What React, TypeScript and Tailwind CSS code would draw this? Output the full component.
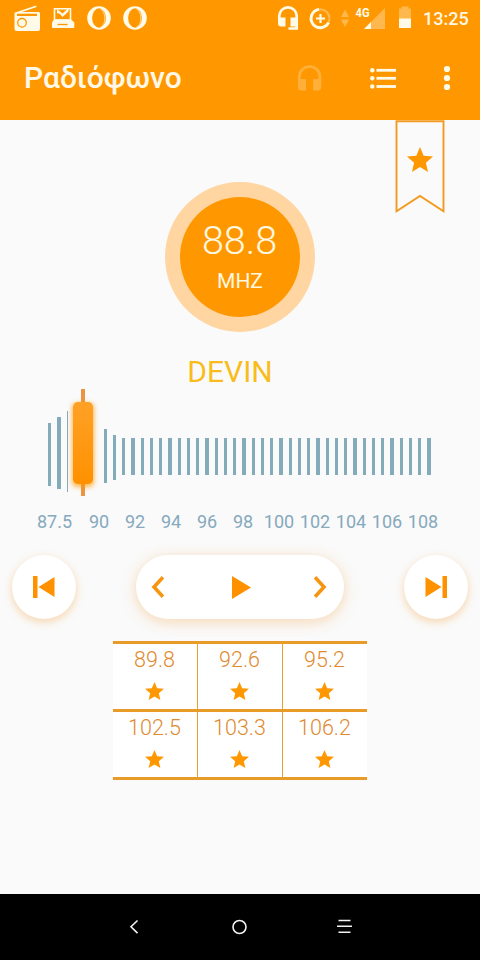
const dialBars = Array.from({ length: 42 }, (_, i) => i).filter((i) => i < 3 || i > 5);

// top and bottom of the bars around the tuner, the rest are 438-475
const raised: Record<number, [number, number]> = {
  0: [423, 486],
  1: [417, 489],
  2: [411, 492],
  6: [429, 483],
  7: [435, 480],
};

const dialLabels = ["87.5", "90", "92", "94", "96", "98", "100", "102", "104", "106", "108"];

const presets = [
  ["89.8", "92.6", "95.2"],
  ["102.5", "103.3", "106.2"],
];

function Star({ className }: { className: string }) {
  return (
    <svg viewBox="2 2 20 19" preserveAspectRatio="none" className={className} fill="#ff9800">
      <path d="M12 17.27L18.18 21l-1.64-7.03L22 9.24l-7.19-.61L12 2 9.19 8.63 2 9.24l5.46 4.73L5.82 21z" />
    </svg>
  );
}

function StatusBar() {
  return (
    <div className="flex h-9 items-center justify-between">
      <svg width="160" height="36" viewBox="0 0 160 36" fill="#fffbe8">
        <path d="M14.500 12.700L36 5.500l.7 1.600L22 12h16.500q1.500 0 1.500 1.500V29q0 2-2 2H16.500q-2 0-2-2V14z" />
        <path d="M17 13.700h20v2.300H17z" fill="#ff9800" />
        <circle cx="22" cy="22.800" r="4.300" fill="none" stroke="#ff9800" strokeWidth="1.300" />
        <path d="M54.500 8.700h16V20h-16z" fill="none" stroke="#fffbe8" strokeWidth="1.600" />
        <path d="M57 9l5.500 4.500L68.500 8v3.500L62.500 17 60 14l-3-1z" />
        <path d="M54 19.500h17l3.300 3V27q0 1-1 1H53q-1 0-1-1v-4.500z" />
        <path d="M57.500 24.500h10" stroke="#ff9800" strokeWidth="1.300" />
        {[99, 135].map((x) => (
          <g key={x}>
            <circle cx={x} cy="18" r="11.800" />
            <ellipse cx={x} cy="18" rx="6.900" ry="9.700" fill="#ff9800" />
            <path d={`M${x + 1} 8.500q4.500 2.500 4.800 9.500t-4.800 9.500`} fill="none" stroke="#ffd68c" strokeWidth="1" />
          </g>
        ))}
      </svg>
      <div className="flex items-center pr-3">
        <svg width="145" height="36" viewBox="275 0 145 36">
          <path d="M279.300 20v-4a8.700 8.700 0 0 1 17.400 0v12.500h-8.200" fill="none" stroke="#fffbe8" strokeWidth="2.700" />
          <path d="M278 17.500h7.500v9h-4.500q-3 0-3-3zM290.500 17.500h7.500v9h-7.500z" fill="#fffbe8" />
          <circle cx="320.300" cy="18.500" r="9.200" fill="none" stroke="#ffb84d" strokeWidth="2.200" />
          <path d="M319 9.400a9.200 9.200 0 1 0 9.500 13.300" fill="none" stroke="#fffbe8" strokeWidth="2.900" />
          <path d="M320.500 14v9M316 18.500h9" stroke="#fffbe8" strokeWidth="2.200" />
          <path d="M345 9.500l4 7.500h-8zM345 27l4-7.500h-8z" fill="#ffb84d" />
          <path d="M385 8v21h-21z" fill="#ffb84d" />
          <path d="M371 22v7h-7z" fill="#fffbe8" />
          <path d="M399 8.500h2.500V6.500h7v2H411V19h-12z" fill="#ffb84d" />
          <path d="M399 18.500h12V28h-12z" fill="#fffbe8" />
          <rect x="354" y="7" width="16" height="11" fill="#ff9800" />
          <text x="355.500" y="17" fontSize="12.500" fontWeight="700" fill="#fffbe8" textLength="14" lengthAdjust="spacingAndGlyphs">
            4G
          </text>
        </svg>
        <span className="mt-[2px] w-[48px] pl-[3px] text-[18px] leading-none font-medium whitespace-nowrap text-[#fff8e6]">13:25</span>
      </div>
    </div>
  );
}

function AppBar() {
  return (
    <div className="flex h-[84px] items-center justify-between pr-[27px] pl-6">
      <h1 className="text-[30px] leading-none font-medium text-[#fff8e6]">Ραδιόφωνο</h1>
      <svg width="156" height="32" viewBox="297 62 156 32">
        <path
          d="M299.300 84V76.800a10.300 10.300 0 0 1 20.600 0V84"
          fill="none"
          stroke="#ffb03a"
          strokeWidth="2.700"
        />
        <path
          d="M298 79h8v11.500h-5q-3 0-3-3zM313.200 79h8v8.500q0 3-3 3h-5z"
          fill="#ffb03a"
        />
        <g fill="#fffbe8">
          {[70.3, 78.3, 86.5].map((y) => (
            <g key={y}>
              <circle cx="372.300" cy={y} r="2.200" />
              <rect x="376.500" y={y - 1.4} width="19.500" height="2.800" />
            </g>
          ))}
          <circle cx="447" cy="69" r="3.100" />
          <circle cx="447" cy="78" r="3.100" />
          <circle cx="447" cy="87" r="3.100" />
        </g>
      </svg>
    </div>
  );
}

function Dial() {
  return (
    <svg width="480" height="120" viewBox="0 385 480 120" className="block">
      <defs>
        <linearGradient id="knob" x1="0" y1="0" x2="0" y2="1">
          <stop offset="0" stopColor="#ffa126" />
          <stop offset="1" stopColor="#ff9100" />
        </linearGradient>
        <filter id="glow" x="-50%" y="-20%" width="200%" height="140%">
          <feGaussianBlur stdDeviation="2.500" />
        </filter>
      </defs>
      {dialBars.map((i) => {
        const [top, bottom] = raised[i] ?? [438, 475];
        const width = i === 2 ? 1 : i % 4 === 1 ? 4 : 3;
        return (
          <rect key={i} x={Math.round(48 + i * 9.25)} y={top} width={width} height={bottom - top} fill="#84abba" />
        );
      })}
      <rect x="81" y="389" width="4" height="107" fill="#eb9442" />
      <rect x="72" y="403" width="22" height="84" rx="5" fill="#ff9800" opacity="0.700" filter="url(#glow)" />
      <rect x="73" y="402" width="20" height="82" rx="5" fill="url(#knob)" />
    </svg>
  );
}

function Controls() {
  return (
    <div className="flex items-center justify-between px-3">
      <button className="flex size-16 items-center justify-center rounded-full bg-white shadow-[0_3px_8px_rgba(240,150,40,0.36)]">
        <svg width="22" height="22" viewBox="0 0 22 22" fill="#ff9100">
          <path d="M0 0h4.500v22H0zM21.500 1v20L5.500 11z" />
        </svg>
      </button>
      <div className="flex h-16 w-52 items-center justify-between rounded-full bg-white pr-[17px] pl-[15px] shadow-[0_3px_14px_rgba(240,150,40,0.34)]">
        <svg width="13" height="22" viewBox="0 0 13 22" fill="none" stroke="#f79410" strokeWidth="3.600">
          <path d="M12 1.300L3 11l9 9.700" />
        </svg>
        <svg width="19" height="23" viewBox="0 0 19 23" fill="#ff9100" className="ml-[4px]">
          <path d="M0 0l19 11.500L0 23z" />
        </svg>
        <svg width="13" height="22" viewBox="0 0 13 22" fill="none" stroke="#f79410" strokeWidth="3.600">
          <path d="M1 1.300l9 9.700-9 9.700" />
        </svg>
      </div>
      <button className="flex size-16 items-center justify-center rounded-full bg-white shadow-[0_3px_8px_rgba(240,150,40,0.36)]">
        <svg width="22" height="22" viewBox="0 0 22 22" fill="#ff9100">
          <path d="M17.500 0H22v22h-4.500zM.5 1v20l16-10z" />
        </svg>
      </button>
    </div>
  );
}

function Presets() {
  return (
    <div className="mx-auto mt-[22px] w-[254px] border-t-[3px] border-[#e89c27] bg-white">
      {presets.map((row) => (
        <div key={row[0]} className="grid h-[68px] grid-cols-[85px_85px_84px] border-b-[3px] border-[#e89c27]">
          {row.map((freq, i) => (
            <div
              key={freq}
              className={
                i < 2
                  ? "flex flex-col items-center border-r border-[#dfa52c] pt-1 pr-px"
                  : "flex flex-col items-center pt-1 pr-px"
              }
            >
              <span className="text-[21.500px] leading-6 font-light text-[#e08a30]">{freq}</span>
              <Star className="mt-[10px] h-[18px] w-[19px]" />
            </div>
          ))}
        </div>
      ))}
    </div>
  );
}

function NavBar() {
  return (
    <div className="flex h-[66px] items-center bg-black">
      <svg width="480" height="66" viewBox="0 894 480 66" fill="none" stroke="#f2f2f2" strokeWidth="1.600">
        <path d="M137.500 920.500l-6.500 6.300 6.500 6.300" />
        <circle cx="239.500" cy="927" r="6.500" />
        <path d="M338.500 920.500h12M337 926.300h15M338.500 932.200h12" />
      </svg>
    </div>
  );
}

export default function App() {
  return (
    <div className="flex h-[960px] w-[480px] flex-col overflow-hidden bg-[#fafafa] font-[Roboto,sans-serif]">
      <header className="h-[120px] bg-[#ff9800]">
        <StatusBar />
        <AppBar />
      </header>

      <main className="relative flex-1">
        <div className="absolute top-0 right-[35px] h-[94px] w-[50px]">
          <svg width="50" height="94" viewBox="0 0 50 94" fill="none" stroke="#f39a20" strokeWidth="1.900">
            <path d="M1.500 1.200h47v90L25 76 1.500 91.200z" />
          </svg>
          <Star className="absolute top-[27px] left-[12px] h-[25px] w-[26px]" />
        </div>

        <div className="flex flex-col items-center pt-[62px]">
          <div className="flex size-[150px] items-center justify-center rounded-full bg-[#ffd5a2]">
            <div className="flex size-[120px] flex-col items-center rounded-full bg-[#ff9800] pt-[23px] text-[#fff8e0]">
              <span className="mr-px text-[39.500px] leading-[42px] font-light">88.8</span>
              <span className="mt-[7px] text-[21px] leading-6">MHZ</span>
            </div>
          </div>
          <p className="mt-[22px] mr-[20px] h-[31px] text-[30px] leading-[36px] text-[#f8bd1c]">DEVIN</p>
        </div>

        <Dial />

        <div className="flex h-[50px] pt-[6px] pl-[33px] text-[18px] leading-[22px] text-[#86a9bd]">
          {dialLabels.map((label, i) => (
            <span key={label} className={i === 0 ? "w-[48px] pl-1" : "flex w-9 justify-center"}>
              {label}
            </span>
          ))}
        </div>

        <Controls />
        <Presets />
      </main>

      <NavBar />
    </div>
  );
}
